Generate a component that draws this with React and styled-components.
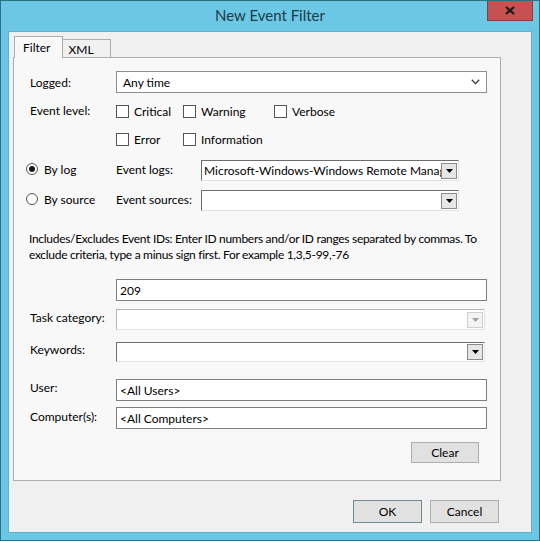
import React from "react";
import styled, { createGlobalStyle } from "styled-components";

const Global = createGlobalStyle`
  html, body { margin: 0; padding: 0; background: #ffffff; }
  body { font-family: Lato, "Open Sans", sans-serif; font-size: 12px; color: #000; }
  * { box-sizing: border-box; }
`;

const Window = styled.div`
  width: 540px;
  height: 541px;
  background: #6cc7e5;
  border: 1px solid #2b6f86;
  display: flex;
  flex-direction: column;
`;

const TitleBar = styled.div`
  height: 30px;
  flex: none;
  display: grid;
  grid-template-columns: 1fr auto 1fr;
  align-items: start;
`;

const Title = styled.div`
  grid-column: 2;
  padding-top: 5px;
  font-size: 15px;
  color: #1d3a47;
`;

const CloseButton = styled.div`
  grid-column: 3;
  justify-self: end;
  margin-right: 6px;
  width: 46px;
  height: 20px;
  background: #c75050;
  border: 1px solid #8f3a3a;
  border-top: none;
  display: flex;
  align-items: center;
  justify-content: center;
`;

const Client = styled.div`
  flex: 1;
  margin: 0 7px 7px 7px;
  background: #f0f0f0;
  border: 1px solid #5eb0cc;
  display: flex;
  flex-direction: column;
  padding: 4px 30px 0 4px;
`;

const TabStrip = styled.div`
  display: flex;
  align-items: flex-end;
  height: 22px;
  padding-left: 1px;
  position: relative;
  z-index: 1;
  margin-bottom: -1px;
`;

const Tab = styled.div`
  height: ${(p) => (p.$active ? "22px" : "19px")};
  padding: ${(p) => (p.$active ? "3px 12px 0 8px" : "2px 16px 0 5px")};
  background: ${(p) => (p.$active ? "#f8f8f8" : "#f0f0f0")};
  border: 1px solid #acacac;
  border-bottom: ${(p) => (p.$active ? "none" : "1px solid #acacac")};
  margin-left: ${(p) => (p.$active ? "0" : "-1px")};
  font-size: 12px;
`;

const Panel = styled.div`
  border: 1px solid #acacac;
  background: #f8f8f8;
  display: flex;
  flex-direction: column;
  padding: 13px 13px 17px 0;
`;

const Row = styled.div`
  display: grid;
  grid-template-columns: ${(p) => p.$cols || "86px 1fr"};
  align-items: center;
  height: ${(p) => p.$h || 22}px;
  margin-top: ${(p) => p.$mt || 0}px;
  padding-left: ${(p) => (p.$pl ?? 16)}px;
`;

const Label = styled.div`
  font-size: 12px;
  white-space: nowrap;
  margin-top: ${(p) => (p.$up ? `-${p.$up}px` : "0")};
`;

const SelectBox = styled.div`
  height: 22px;
  background: #ffffff;
  border: 1px solid #8d8d8d;
  display: flex;
  align-items: center;
  justify-content: space-between;
  padding: 0 6px 0 5px;
`;

const TextBox = styled.div`
  height: ${(p) => p.$h || 21}px;
  background: #ffffff;
  border: 1px solid #7f7f7f;
  display: flex;
  align-items: center;
  padding-left: 3px;
  font-size: 12px;
  white-space: nowrap;
  overflow: hidden;
`;

const Combo = styled.div`
  height: ${(p) => p.$h || 21}px;
  width: ${(p) => p.$w || "auto"};
  background: #ffffff;
  border-top: 1px solid ${(p) => (p.$disabled ? "#b5b5b5" : "#6d6d6d")};
  border-left: 1px solid ${(p) => (p.$disabled ? "#b5b5b5" : "#6d6d6d")};
  border-right: 1px solid #e3e3e3;
  border-bottom: 1px solid #e3e3e3;
  display: flex;
  align-items: center;
  justify-content: space-between;
  padding: 0 1px;
  overflow: hidden;
`;

const ComboText = styled.div`
  font-size: 12px;
  white-space: nowrap;
  overflow: hidden;
  flex: 1;
  padding-left: 1px;
`;

const DropButton = styled.div`
  flex: none;
  width: 16px;
  height: 16px;
  background: ${(p) => (p.$disabled ? "#f4f4f4" : "#e6e6e6")};
  border: 1px solid ${(p) => (p.$disabled ? "#cfcfcf" : "#8a8a8a")};
  display: flex;
  align-items: center;
  justify-content: center;
`;

const CheckGroup = styled.div`
  display: grid;
  grid-template-columns: 67px 91px auto;
  align-items: center;
`;

const CheckItem = styled.label`
  display: flex;
  align-items: center;
  gap: 5px;
  font-size: 12px;
  white-space: nowrap;
`;

const CheckBox = styled.span`
  width: 13px;
  height: 13px;
  background: #ffffff;
  border: 1px solid #555555;
  flex: none;
`;

const RadioItem = styled.label`
  display: flex;
  align-items: center;
  gap: 6px;
  font-size: 12px;
  white-space: nowrap;
  margin-top: -3px;
`;

const Radio = styled.span`
  width: 12px;
  height: 12px;
  border-radius: 50%;
  border: 1px solid #555555;
  background: #ffffff;
  flex: none;
  display: flex;
  align-items: center;
  justify-content: center;
  &::after {
    content: "";
    width: 6px;
    height: 6px;
    border-radius: 50%;
    background: ${(p) => (p.$on ? "#1a1a1a" : "transparent")};
  }
`;

const Info = styled.p`
  margin: 20px 0 0 0;
  padding-left: 15px;
  font-size: 12px;
  line-height: 16px;
  letter-spacing: -0.3px;
  width: 475px;
`;

const ButtonRow = styled.div`
  display: flex;
  justify-content: flex-end;
  gap: ${(p) => p.$gap || 8}px;
  margin-top: ${(p) => p.$mt || 0}px;
  padding-right: ${(p) => p.$pr || 0}px;
`;

const Button = styled.div`
  width: ${(p) => p.$w || 68}px;
  height: ${(p) => p.$h || 22}px;
  background: #e1e1e1;
  border: 1px solid ${(p) => (p.$default ? "#6f8a96" : "#adadad")};
  display: flex;
  align-items: center;
  justify-content: center;
  font-size: 12px;
`;

const Chevron = () => (
  <svg width="9" height="6" viewBox="0 0 9 6">
    <path d="M0.8 0.8 L4.5 4.6 L8.2 0.8" fill="none" stroke="#333" strokeWidth="1.3" />
  </svg>
);

const Tri = ({ color = "#000" }) => (
  <svg width="7" height="4" viewBox="0 0 7 4">
    <path d="M0 0 H7 L3.5 4 Z" fill={color} />
  </svg>
);

const CloseX = () => (
  <svg width="10" height="9" viewBox="0 0 10 9">
    <path d="M1 1 L9 8 M9 1 L1 8" stroke="#1b1b1b" strokeWidth="2.2" />
  </svg>
);

export default function App() {
  return (
    <>
      <Global />
      <Window>
        <TitleBar>
          <Title>New Event Filter</Title>
          <CloseButton>
            <CloseX />
          </CloseButton>
        </TitleBar>
        <Client>
          <TabStrip>
            <Tab $active>Filter</Tab>
            <Tab>XML</Tab>
          </TabStrip>
          <Panel>
            <Row $h={22}>
              <Label>Logged:</Label>
              <SelectBox>
                <ComboText>Any time</ComboText>
                <Chevron />
              </SelectBox>
            </Row>
            <Row $h={20} $mt={8}>
              <Label $up={2}>Event level:</Label>
              <CheckGroup>
                <CheckItem><CheckBox />Critical</CheckItem>
                <CheckItem><CheckBox />Warning</CheckItem>
                <CheckItem><CheckBox />Verbose</CheckItem>
              </CheckGroup>
            </Row>
            <Row $h={20} $mt={8}>
              <span />
              <CheckGroup>
                <CheckItem><CheckBox />Error</CheckItem>
                <CheckItem><CheckBox />Information</CheckItem>
              </CheckGroup>
            </Row>
            <Row $h={20} $mt={11} $pl={12} $cols="90px 85px 258px">
              <RadioItem><Radio $on />By log</RadioItem>
              <Label $up={3}>Event logs:</Label>
              <Combo $h={21}>
                <ComboText>Microsoft-Windows-Windows Remote Management/Operational</ComboText>
                <DropButton><Tri /></DropButton>
              </Combo>
            </Row>
            <Row $h={21} $mt={10} $pl={12} $cols="90px 85px 258px">
              <RadioItem><Radio />By source</RadioItem>
              <Label $up={3}>Event sources:</Label>
              <Combo $h={21}>
                <ComboText />
                <DropButton><Tri /></DropButton>
              </Combo>
            </Row>
            <Info>
              Includes/Excludes Event IDs: Enter ID numbers and/or ID ranges separated by commas. To
              exclude criteria, type a minus sign first. For example 1,3,5-99,-76
            </Info>
            <Row $h={22} $mt={16}>
              <span />
              <TextBox $h={22}>209</TextBox>
            </Row>
            <Row $h={21} $mt={8}>
              <Label $up={4}>Task category:</Label>
              <Combo $h={21} $w="369px" $disabled>
                <ComboText />
                <DropButton $disabled><Tri color="#a0a0a0" /></DropButton>
              </Combo>
            </Row>
            <Row $h={20} $mt={12}>
              <Label $up={6}>Keywords:</Label>
              <Combo $h={20} $w="369px">
                <ComboText />
                <DropButton><Tri /></DropButton>
              </Combo>
            </Row>
            <Row $h={22} $mt={17}>
              <Label $up={6}>User:</Label>
              <TextBox $h={22}>&lt;All Users&gt;</TextBox>
            </Row>
            <Row $h={22} $mt={6}>
              <Label $up={4}>Computer(s):</Label>
              <TextBox $h={22}>&lt;All Computers&gt;</TextBox>
            </Row>
            <ButtonRow $mt={13} $pr={8}>
              <Button $w={68} $h={21}>Clear</Button>
            </ButtonRow>
          </Panel>
          <ButtonRow $mt={19} $gap={8} $pr={2}>
            <Button $default $w={69} $h={23}>OK</Button>
            <Button $w={69} $h={23}>Cancel</Button>
          </ButtonRow>
        </Client>
      </Window>
    </>
  );
}
